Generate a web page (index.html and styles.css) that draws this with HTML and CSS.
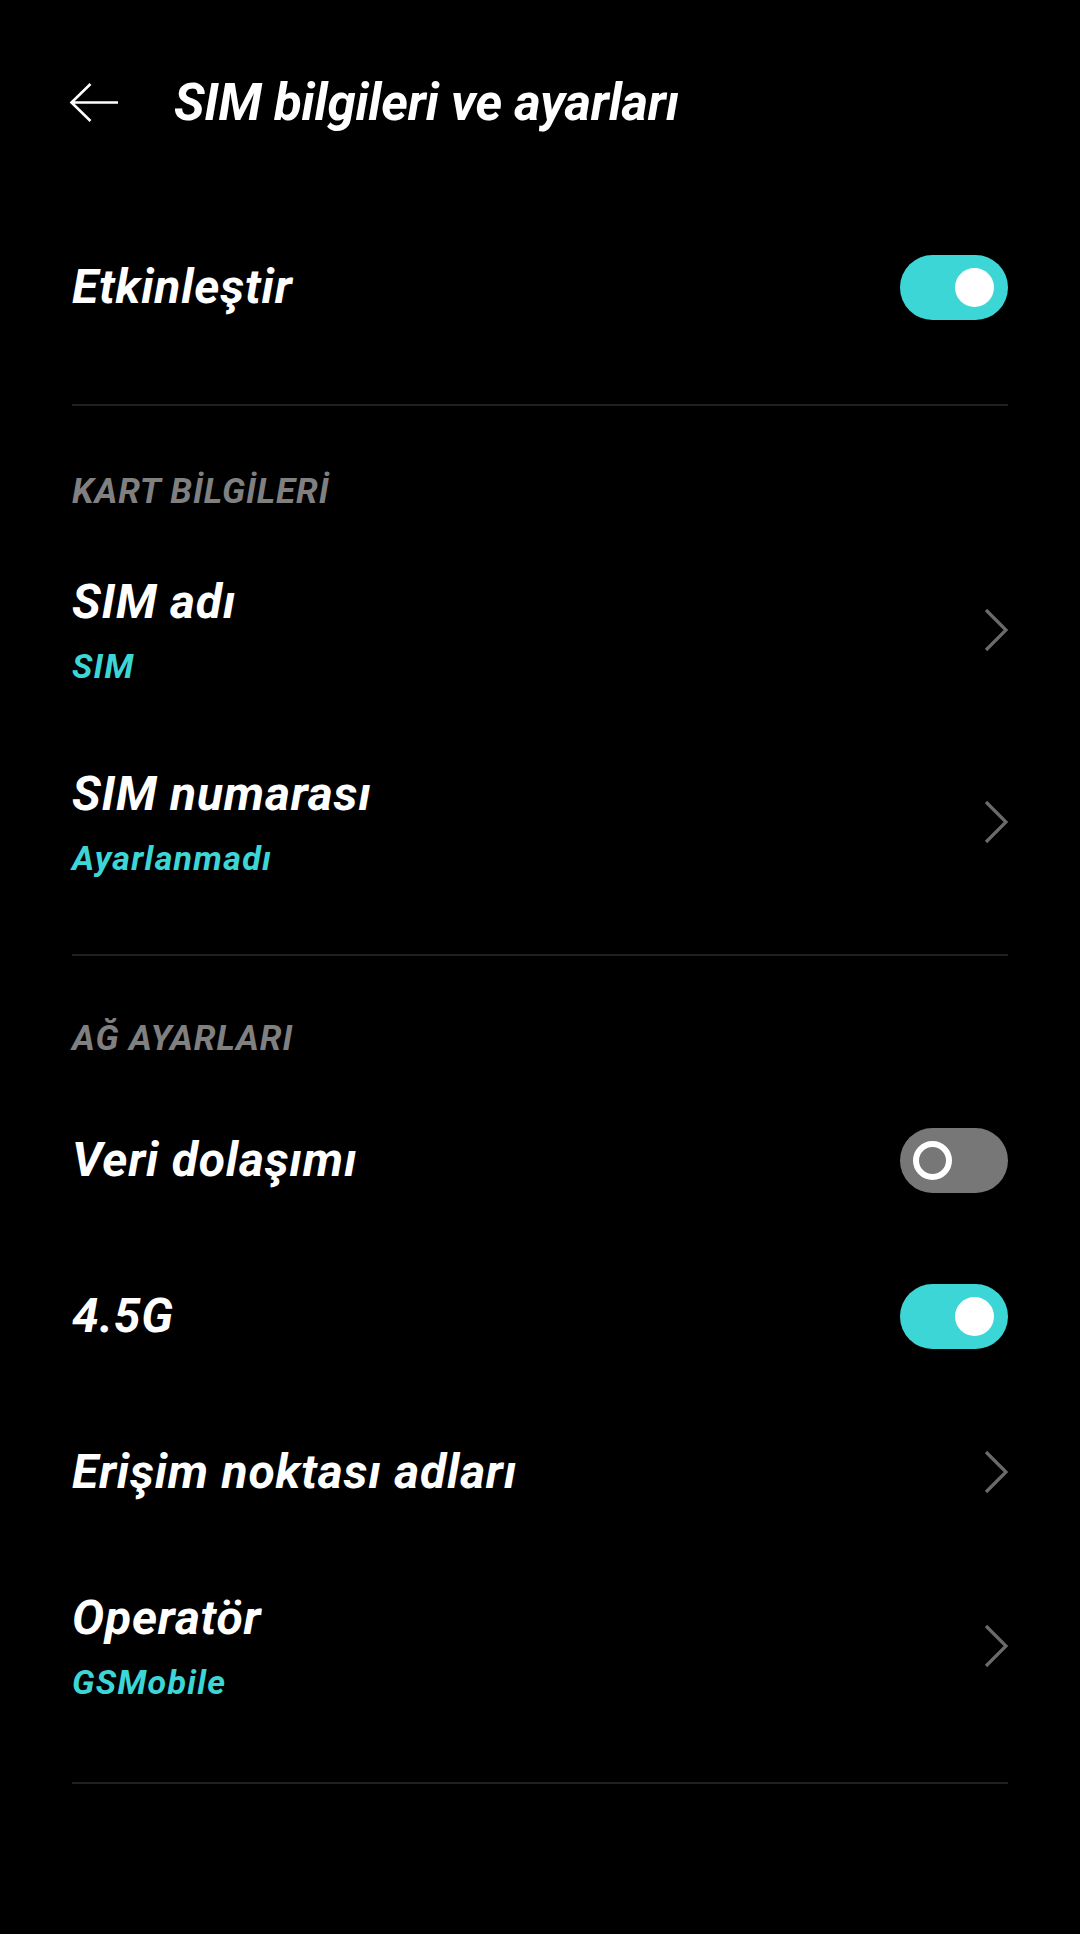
FILE: index.html
```html
<!DOCTYPE html>
<html lang="tr">
<head>
<meta charset="utf-8">
<title>SIM bilgileri ve ayarları</title>
<link rel="stylesheet" href="styles.css">
</head>
<body>
<div class="screen">
  <header class="topbar">
    <svg class="back" width="50" height="42" viewBox="0 0 50 42" aria-hidden="true">
      <path d="M49 20.5H2.5M21.5 2L2.5 20.5L21.5 39" fill="none" stroke="#fff" stroke-width="2.6" stroke-linejoin="miter"/>
    </svg>
    <h1 class="title">SIM bilgileri ve ayarları</h1>
  </header>

  <div class="row row-main">
    <span class="label">Etkinleştir</span>
    <span class="toggle on"><span class="knob"></span></span>
  </div>
  <div class="divider"></div>

  <div class="section">KART BİLGİLERİ</div>
  <div class="row row-two">
    <div class="text">
      <span class="label">SIM adı</span>
      <span class="value">SIM</span>
    </div>
    <svg class="chev" width="26" height="44" viewBox="0 0 26 44" aria-hidden="true"><path d="M3 2L23 22L3 42" fill="none" stroke="#6a6a6a" stroke-width="3.2"/></svg>
  </div>
  <div class="row row-two">
    <div class="text">
      <span class="label">SIM numarası</span>
      <span class="value">Ayarlanmadı</span>
    </div>
    <svg class="chev" width="26" height="44" viewBox="0 0 26 44" aria-hidden="true"><path d="M3 2L23 22L3 42" fill="none" stroke="#6a6a6a" stroke-width="3.2"/></svg>
  </div>
  <div class="divider"></div>

  <div class="section section-2">AĞ AYARLARI</div>
  <div class="row row-one">
    <span class="label">Veri dolaşımı</span>
    <span class="toggle off"><span class="knob"></span></span>
  </div>
  <div class="row row-one">
    <span class="label">4.5G</span>
    <span class="toggle on"><span class="knob"></span></span>
  </div>
  <div class="row row-one">
    <span class="label">Erişim noktası adları</span>
    <svg class="chev" width="26" height="44" viewBox="0 0 26 44" aria-hidden="true"><path d="M3 2L23 22L3 42" fill="none" stroke="#6a6a6a" stroke-width="3.2"/></svg>
  </div>
  <div class="row row-two">
    <div class="text">
      <span class="label">Operatör</span>
      <span class="value">GSMobile</span>
    </div>
    <svg class="chev" width="26" height="44" viewBox="0 0 26 44" aria-hidden="true"><path d="M3 2L23 22L3 42" fill="none" stroke="#6a6a6a" stroke-width="3.2"/></svg>
  </div>
  <div class="divider divider-last"></div>
</div>
</body>
</html>
```

FILE: styles.css
```css
html, body {
  margin: 0;
  padding: 0;
  background: #000;
}

body {
  width: 1080px;
  min-height: 1934px;
  font-family: Roboto, "Noto Sans", "DejaVu Sans", sans-serif;
  font-style: italic;
  font-weight: 700;
  color: #fff;
}

.screen {
  padding: 0 72px;
}

.topbar {
  height: 206px;
  display: flex;
  align-items: center;
  gap: 55px;
  margin-left: -3px;
}

.back {
  display: block;
  flex: none;
}

.title {
  margin: 0;
  font-size: 51px;
  line-height: 60px;
  font-weight: 700;
  letter-spacing: -0.2px;
}

.row {
  display: flex;
  align-items: center;
  justify-content: space-between;
}

.row-main {
  height: 162px;
}

.row-one {
  height: 156px;
}

.row-two {
  height: 192px;
}

.text {
  display: flex;
  flex-direction: column;
  gap: 16px;
}

.label {
  font-size: 48px;
  line-height: 56px;
  letter-spacing: 0.8px;
  white-space: nowrap;
}

.value {
  font-size: 34px;
  line-height: 40px;
  letter-spacing: 1.3px;
  color: #3dd6d6;
}

.section {
  font-size: 35px;
  line-height: 40px;
  letter-spacing: 0.9px;
  color: #808080;
  padding: 66px 0 22px;
}

.section-2 {
  padding: 63px 0 23px;
}

.divider {
  height: 2px;
  background: #1f1f1f;
  margin-top: 36px;
}

.divider-last {
  margin-top: 40px;
}

.chev {
  display: block;
  flex: none;
  margin-right: -1px;
}

.toggle {
  position: relative;
  flex: none;
  width: 108px;
  height: 65px;
  border-radius: 33px;
}

.toggle.on {
  background: #3dd6d6;
}

.toggle.off {
  background: #777777;
}

.knob {
  position: absolute;
  top: 13px;
  width: 39px;
  height: 39px;
  border-radius: 50%;
  box-sizing: border-box;
}

.toggle.on .knob {
  right: 14px;
  background: #fff;
}

.toggle.off .knob {
  left: 13px;
  border: 6px solid #fff;
  background: #777777;
}
```
